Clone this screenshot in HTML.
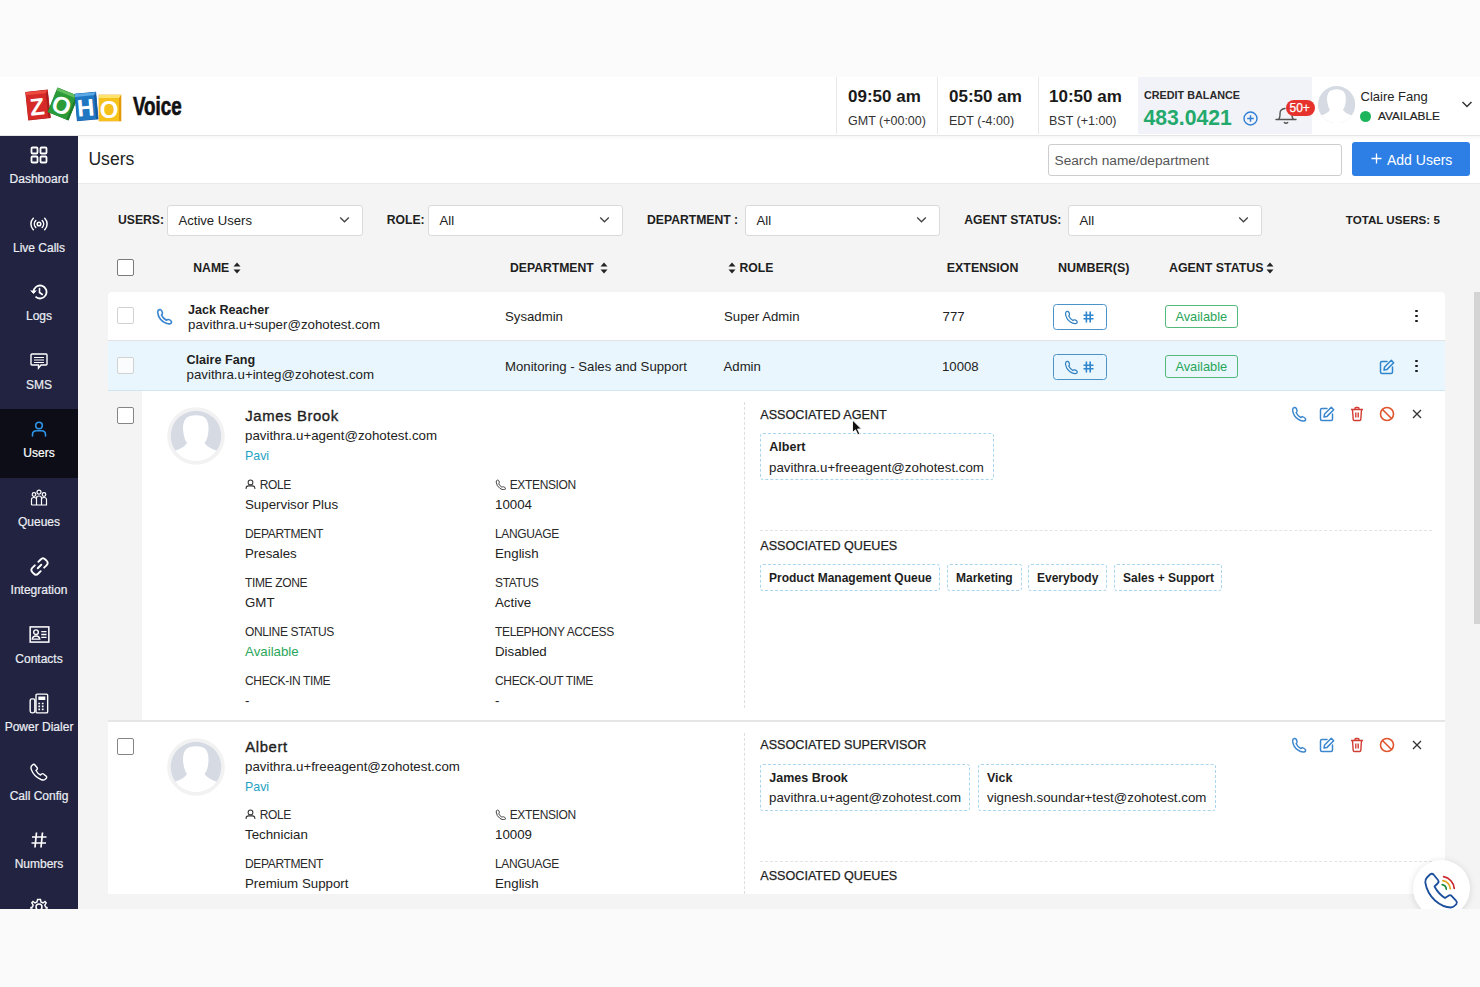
<!DOCTYPE html><html><head><meta charset="utf-8"><style>
html,body{margin:0;padding:0}
body{width:1480px;height:987px;overflow:hidden;position:relative;background:#fbfbfb;font-family:"Liberation Sans", sans-serif;}
.t{position:absolute;white-space:nowrap}
.r{position:absolute;box-sizing:border-box}
</style></head><body>
<div class="r" style="left:0px;top:77px;width:1480px;height:59px;background:#fff;border-bottom:1px solid #e6e6e6"></div>
<div class="r" style="left:27px;top:91px;width:22px;height:28px;transform:rotate(-6deg);background:#d62a28;border-top:3px solid #ec4a3e;border-right:2px solid #a81e1d;box-shadow:0 0 0 0.3px #a81e1d"><div style="position:absolute;left:0;right:0;top:0;bottom:0;text-align:center;font-weight:700;color:#fff;font-size:24px;line-height:25px;font-family:"Liberation Sans", sans-serif;-webkit-text-stroke:0.6px #fff">Z</div></div>
<div class="r" style="left:52px;top:91px;width:22px;height:26px;transform:rotate(22deg);background:#2b9b3a;border-top:3px solid #62be5e;border-right:2px solid #1f7a2c;box-shadow:0 0 0 0.3px #1f7a2c"><div style="position:absolute;left:0;right:0;top:0;bottom:0;text-align:center;font-weight:700;color:#fff;font-size:24px;line-height:23px;font-family:"Liberation Sans", sans-serif;-webkit-text-stroke:0.6px #fff">O</div></div>
<div class="r" style="left:76px;top:93px;width:21px;height:27px;transform:rotate(-5deg);background:#1f76c1;border-top:3px solid #5aa8e6;border-right:2px solid #165aa0;box-shadow:0 0 0 0.3px #165aa0"><div style="position:absolute;left:0;right:0;top:0;bottom:0;text-align:center;font-weight:700;color:#fff;font-size:24px;line-height:24px;font-family:"Liberation Sans", sans-serif;-webkit-text-stroke:0.6px #fff">H</div></div>
<div class="r" style="left:99px;top:95px;width:22px;height:26px;transform:rotate(0deg);background:#f6c11a;border-top:3px solid #fde36b;border-right:2px solid #e39a0a;box-shadow:0 0 0 0.3px #e39a0a"><div style="position:absolute;left:0;right:0;top:0;bottom:0;text-align:center;font-weight:700;color:#fff;font-size:24px;line-height:23px;font-family:"Liberation Sans", sans-serif;-webkit-text-stroke:0.6px #fff">O</div></div>
<div class="t" style="left:132.5px;top:91px;font-size:25px;line-height:30px;font-weight:700;color:#111;-webkit-text-stroke:0.7px #111;transform:scaleX(0.75);transform-origin:0 0">Voice</div>
<div class="r" style="left:836px;top:77px;width:1px;height:57px;background:#e8e8e8"></div>
<div class="r" style="left:937px;top:77px;width:1px;height:57px;background:#e8e8e8"></div>
<div class="r" style="left:1038px;top:77px;width:1px;height:57px;background:#e8e8e8"></div>
<div class="t" style="left:848.0px;top:87.7px;font-size:17px;line-height:17px;font-weight:700;color:#1a1a1a;">09:50 am</div>
<div class="t" style="left:848.0px;top:114.6px;font-size:12.5px;line-height:12.5px;font-weight:400;color:#333;">GMT (+00:00)</div>
<div class="t" style="left:949.0px;top:87.7px;font-size:17px;line-height:17px;font-weight:700;color:#1a1a1a;">05:50 am</div>
<div class="t" style="left:949.0px;top:114.6px;font-size:12.5px;line-height:12.5px;font-weight:400;color:#333;">EDT (-4:00)</div>
<div class="t" style="left:1049.0px;top:87.7px;font-size:17px;line-height:17px;font-weight:700;color:#1a1a1a;">10:50 am</div>
<div class="t" style="left:1049.0px;top:114.6px;font-size:12.5px;line-height:12.5px;font-weight:400;color:#333;">BST (+1:00)</div>
<div class="r" style="left:1138px;top:77px;width:174px;height:57px;background:#f1f3f8"></div>
<div class="t" style="left:1144.0px;top:89.6px;font-size:10.8px;line-height:10.8px;font-weight:700;color:#2a2a2a;">CREDIT BALANCE</div>
<div class="t" style="left:1143.5px;top:107.4px;font-size:21.2px;line-height:21.2px;font-weight:700;color:#23a96c;">483.0421</div>
<svg class="r" style="left:1243px;top:111px;" width="15" height="15" viewBox="0 0 15 15"><circle cx="7.5" cy="7.5" r="6.5" fill="none" stroke="#2f7fd6" stroke-width="1.4"/><path d="M7.5 4.2v6.6M4.2 7.5h6.6" stroke="#2f7fd6" stroke-width="1.4"/></svg>
<svg class="r" style="left:1274px;top:104px;" width="24" height="22" viewBox="0 0 24 22"><path d="M2 15.5 H22 M4.5 15.5 Q6 14 6 11 V9.5 Q6 5 11 4.5 M19.5 15.5 Q18 14 18 11 V9.5" fill="none" stroke="#555" stroke-width="1.4" stroke-linejoin="round" stroke-linecap="round"/><path d="M10.3 18.6 Q12 19.8 13.7 18.6" fill="none" stroke="#555" stroke-width="1.4" stroke-linecap="round"/></svg>
<div class="r" style="left:1285.5px;top:100px;width:29.5px;height:16px;background:#e5322d;border-radius:8px"></div>
<div class="t" style="left:1289.5px;top:102.3px;font-size:12px;line-height:12px;font-weight:400;color:#fff;-webkit-text-stroke:0.25px #fff">50+</div>
<svg class="r" style="left:1317.7px;top:86px" width="37.2" height="37.2" viewBox="4.7 4.7 50.6 50.6"><defs><clipPath id="avh"><circle cx="30" cy="30" r="25.3"/></clipPath></defs><circle cx="30" cy="30" r="25.3" fill="#d5dae3"/><g clip-path="url(#avh)"><path d="M21 37 Q18 33 17 24 Q16.5 12 24 10 Q30 8.5 36 10 Q43 12 42.5 24 Q42 33 38.5 37 Q42 42 50 44.5 L60 45 L60 60 L0 60 L0 45 L9.7 44.5 Q18 42 21 37 Z" fill="#fff"/></g></svg>
<div class="t" style="left:1360.5px;top:90.2px;font-size:13px;line-height:13px;font-weight:400;color:#222;">Claire Fang</div>
<div class="r" style="left:1360px;top:111px;width:11px;height:11px;background:#1cb55b;border-radius:50%"></div>
<div class="t" style="left:1378.0px;top:110.8px;font-size:11.8px;line-height:11.8px;font-weight:400;color:#222;-webkit-text-stroke:0.2px #222">AVAILABLE</div>
<svg class="r" style="left:1461px;top:100px;" width="12" height="9" viewBox="0 0 12 9"><path d="M1.5 2 L6 6.5 L10.5 2" fill="none" stroke="#333" stroke-width="1.5"/></svg>
<div class="r" style="left:0px;top:135.5px;width:78px;height:773.5px;background:#212340"></div>
<div class="r" style="left:0px;top:409px;width:78px;height:69px;background:#0c0d17"></div>
<svg class="r" style="left:30.0px;top:146.0px;" width="18" height="18" viewBox="0 0 18 18"><rect x="1.5" y="1.5" width="6" height="6" rx="1" fill="none" stroke="#fff" stroke-width="1.8"/><rect x="10.5" y="1.5" width="6" height="6" rx="1" fill="none" stroke="#fff" stroke-width="1.8"/><rect x="1.5" y="10.5" width="6" height="6" rx="1" fill="none" stroke="#fff" stroke-width="1.8"/><rect x="10.5" y="10.5" width="6" height="6" rx="1" fill="none" stroke="#fff" stroke-width="1.8"/></svg>
<div class="t" style="left:9.6px;top:173.0px;font-size:12px;line-height:12px;font-weight:400;color:#eceef4;-webkit-text-stroke:0.2px">Dashboard</div>
<svg class="r" style="left:30.0px;top:214.5px;" width="18" height="18" viewBox="0 0 18 18"><circle cx="9" cy="9" r="1.8" fill="none" stroke="#fff" stroke-width="1.5"/><path d="M5.8 5.5 A5 5 0 0 0 5.8 12.5 M12.2 5.5 A5 5 0 0 1 12.2 12.5 M3.3 3.3 A8 8 0 0 0 3.3 14.7 M14.7 3.3 A8 8 0 0 1 14.7 14.7" fill="none" stroke="#fff" stroke-width="1.5" stroke-linecap="round"/></svg>
<div class="t" style="left:13.0px;top:241.5px;font-size:12px;line-height:12px;font-weight:400;color:#eceef4;-webkit-text-stroke:0.2px">Live Calls</div>
<svg class="r" style="left:30.0px;top:283.0px;" width="18" height="18" viewBox="0 0 18 18"><path d="M3.5 9 A6.5 6.5 0 1 1 5.5 13.7" fill="none" stroke="#fff" stroke-width="1.8"/><path d="M0.8 7.5 L3.5 10.5 L6.2 7.5" fill="#fff" stroke="#fff" stroke-width="1"/><path d="M9.5 5.5 V9.5 L12.3 11.5" fill="none" stroke="#fff" stroke-width="1.6" stroke-linecap="round"/></svg>
<div class="t" style="left:26.0px;top:310.0px;font-size:12px;line-height:12px;font-weight:400;color:#eceef4;-webkit-text-stroke:0.2px">Logs</div>
<svg class="r" style="left:30.0px;top:351.5px;" width="18" height="18" viewBox="0 0 18 18"><path d="M2 2 H16 Q17 2 17 3 V12 Q17 13 16 13 H11 L8.5 16 V13 H2 Q1 13 1 12 V3 Q1 2 2 2 Z" fill="none" stroke="#fff" stroke-width="1.4"/><path d="M4 5.5 H14 M4 8 H14 M4 10.5 H14" stroke="#fff" stroke-width="1.2"/></svg>
<div class="t" style="left:26.0px;top:378.5px;font-size:12px;line-height:12px;font-weight:400;color:#eceef4;-webkit-text-stroke:0.2px">SMS</div>
<svg class="r" style="left:30.0px;top:420.0px;" width="18" height="18" viewBox="0 0 18 18"><circle cx="9" cy="5.5" r="3.3" fill="none" stroke="#2f95e8" stroke-width="1.6"/><path d="M2.5 16 V14.5 Q2.5 10.8 6.5 10.8 H11.5 Q15.5 10.8 15.5 14.5 V16" fill="none" stroke="#2f95e8" stroke-width="1.6" stroke-linecap="round"/></svg>
<div class="t" style="left:23.3px;top:447.0px;font-size:12px;line-height:12px;font-weight:400;color:#fff;-webkit-text-stroke:0.2px">Users</div>
<svg class="r" style="left:30.0px;top:488.5px;" width="18" height="18" viewBox="0 0 18 18"><circle cx="9" cy="3.2" r="2" fill="none" stroke="#fff" stroke-width="1.2"/><circle cx="4" cy="5.5" r="1.8" fill="none" stroke="#fff" stroke-width="1.2"/><circle cx="14" cy="5.5" r="1.8" fill="none" stroke="#fff" stroke-width="1.2"/><path d="M6.5 16 V9 Q6.5 7 9 7 Q11.5 7 11.5 9 V16 M1.5 16 V10.5 Q1.5 8.5 4 8.5 Q6.5 8.5 6.5 10.5 M11.5 10.5 Q11.5 8.5 14 8.5 Q16.5 8.5 16.5 10.5 V16 H1.5" fill="none" stroke="#fff" stroke-width="1.2"/></svg>
<div class="t" style="left:18.0px;top:515.5px;font-size:12px;line-height:12px;font-weight:400;color:#eceef4;-webkit-text-stroke:0.2px">Queues</div>
<svg class="r" style="left:28.5px;top:555.5px;" width="21" height="21" viewBox="0 0 18 18"><path d="M7.5 10.5 L10.5 7.5 M8 5 L10 3 Q12 1 14 3 L15 4 Q17 6 15 8 L13 10 M10 13 L8 15 Q6 17 4 15 L3 14 Q1 12 3 10 L5 8" fill="none" stroke="#fff" stroke-width="1.6" stroke-linecap="round"/></svg>
<div class="t" style="left:10.6px;top:584.0px;font-size:12px;line-height:12px;font-weight:400;color:#eceef4;-webkit-text-stroke:0.2px">Integration</div>
<svg class="r" style="left:28.5px;top:624.0px;" width="21" height="21" viewBox="0 0 18 18"><rect x="1" y="2.5" width="16" height="13" fill="none" stroke="#fff" stroke-width="1.3"/><circle cx="6" cy="7" r="2" fill="none" stroke="#fff" stroke-width="1.2"/><path d="M2.8 13 Q3 10.3 6 10.3 Q9 10.3 9.2 13 Z" fill="none" stroke="#fff" stroke-width="1.2"/><path d="M10.5 6.5 H15 M10.5 9 H15 M10.5 11.5 H15" stroke="#fff" stroke-width="1.2"/></svg>
<div class="t" style="left:15.3px;top:652.5px;font-size:12px;line-height:12px;font-weight:400;color:#eceef4;-webkit-text-stroke:0.2px">Contacts</div>
<svg class="r" style="left:28.5px;top:692.5px;" width="21" height="21" viewBox="0 0 18 18"><rect x="1" y="5" width="4" height="12" rx="1.5" fill="none" stroke="#fff" stroke-width="1.2"/><rect x="6" y="1" width="10" height="16" rx="1" fill="none" stroke="#fff" stroke-width="1.2"/><rect x="8" y="3" width="6" height="3" fill="#fff"/><path d="M8 9h1.5M11 9h1.5M8 11.5h1.5M11 11.5h1.5M8 14h1.5M11 14h1.5" stroke="#fff" stroke-width="1.4"/></svg>
<div class="t" style="left:4.7px;top:721.0px;font-size:12px;line-height:12px;font-weight:400;color:#eceef4;-webkit-text-stroke:0.2px">Power Dialer</div>
<svg class="r" style="left:30.0px;top:762.5px;" width="18" height="18" viewBox="0 0 18 18"><path d="M4.5 1.5 L7 4.5 Q7.8 5.5 7 6.5 L6 7.5 Q7.5 10.5 10.5 12 L11.5 11 Q12.5 10.2 13.5 11 L16.5 13.5 Q17 14.5 16 15.5 L15 16.5 Q13.5 17.5 11 16.5 Q4 13.5 1.5 7 Q0.5 4.5 1.5 3 L2.5 2 Q3.5 1 4.5 1.5 Z" fill="none" stroke="#fff" stroke-width="1.4"/></svg>
<div class="t" style="left:9.7px;top:789.5px;font-size:12px;line-height:12px;font-weight:400;color:#eceef4;-webkit-text-stroke:0.2px">Call Config</div>
<svg class="r" style="left:30.0px;top:831.0px;" width="18" height="18" viewBox="0 0 18 18"><path d="M6.5 1.5 L5 16.5 M12.5 1.5 L11 16.5 M2 6 H16.5 M1.5 12 H16" stroke="#fff" stroke-width="1.7"/></svg>
<div class="t" style="left:14.7px;top:858.0px;font-size:12px;line-height:12px;font-weight:400;color:#eceef4;-webkit-text-stroke:0.2px">Numbers</div>
<svg class="r" style="left:30px;top:898px;" width="18" height="18" viewBox="0 0 18 18"><circle cx="9" cy="9" r="3" fill="none" stroke="#fff" stroke-width="1.5"/><path d="M9 1.5 L10.5 1.5 L11 4 L13 5 L15 3.5 L16.2 4.8 L14.8 7 L15.5 9 L17 9.5 L17 11 L15 11.5" fill="none" stroke="#fff" stroke-width="1.4"/><path d="M9 1.5 L7.5 1.5 L7 4 L5 5 L3 3.5 L1.8 4.8 L3.2 7 L2.5 9 L1 9.5 L1 11 L3 11.5" fill="none" stroke="#fff" stroke-width="1.4"/></svg>
<div class="r" style="left:78px;top:136px;width:1402px;height:48px;background:#fff;border-bottom:1px solid #e9e9e9"></div>
<div class="r" style="left:78px;top:136px;width:1402px;height:4px;background:linear-gradient(rgba(0,0,0,0.03),rgba(0,0,0,0))"></div>
<div class="t" style="left:88.4px;top:151.4px;font-size:17.6px;line-height:17.6px;font-weight:400;color:#1e1e1e;">Users</div>
<div class="r" style="left:1048px;top:144px;width:294px;height:32px;background:#fff;border:1px solid #cdcdcd;border-radius:3px"></div>
<div class="t" style="left:1054.5px;top:153.6px;font-size:13.7px;line-height:13.7px;font-weight:400;color:#555;">Search name/department</div>
<div class="r" style="left:1352px;top:142px;width:118px;height:34px;background:#2d7fe6;border-radius:3px"></div>
<svg class="r" style="left:1371px;top:153px;" width="11" height="11" viewBox="0 0 11 11"><path d="M5.5 0.5 V10.5 M0.5 5.5 H10.5" stroke="#fff" stroke-width="1.3"/></svg>
<div class="t" style="left:1387.0px;top:153.4px;font-size:14px;line-height:14px;font-weight:400;color:#fff;">Add Users</div>
<div class="r" style="left:78px;top:184px;width:1402px;height:725px;background:#f4f4f4"></div>
<div class="t" style="left:118.0px;top:213.9px;font-size:12.2px;line-height:12.2px;font-weight:700;color:#1e1e1e;">USERS:</div>
<div class="r" style="left:167px;top:205px;width:196px;height:31px;background:#fff;border:1px solid #dadada;border-radius:3px"></div>
<div class="t" style="left:178.5px;top:214.1px;font-size:13.1px;line-height:13.1px;font-weight:400;color:#222;">Active Users</div>
<svg class="r" style="left:339px;top:216px;" width="11" height="8" viewBox="0 0 11 8"><path d="M1.2 1.5 L5.5 5.8 L9.8 1.5" fill="none" stroke="#444" stroke-width="1.3"/></svg>
<div class="t" style="left:386.7px;top:213.9px;font-size:12.2px;line-height:12.2px;font-weight:700;color:#1e1e1e;">ROLE:</div>
<div class="r" style="left:428px;top:205px;width:195px;height:31px;background:#fff;border:1px solid #dadada;border-radius:3px"></div>
<div class="t" style="left:439.5px;top:214.1px;font-size:13.1px;line-height:13.1px;font-weight:400;color:#222;">All</div>
<svg class="r" style="left:599px;top:216px;" width="11" height="8" viewBox="0 0 11 8"><path d="M1.2 1.5 L5.5 5.8 L9.8 1.5" fill="none" stroke="#444" stroke-width="1.3"/></svg>
<div class="t" style="left:647.0px;top:213.9px;font-size:12.2px;line-height:12.2px;font-weight:700;color:#1e1e1e;">DEPARTMENT :</div>
<div class="r" style="left:745px;top:205px;width:195px;height:31px;background:#fff;border:1px solid #dadada;border-radius:3px"></div>
<div class="t" style="left:756.5px;top:214.1px;font-size:13.1px;line-height:13.1px;font-weight:400;color:#222;">All</div>
<svg class="r" style="left:916px;top:216px;" width="11" height="8" viewBox="0 0 11 8"><path d="M1.2 1.5 L5.5 5.8 L9.8 1.5" fill="none" stroke="#444" stroke-width="1.3"/></svg>
<div class="t" style="left:964.3px;top:213.9px;font-size:12.2px;line-height:12.2px;font-weight:700;color:#1e1e1e;">AGENT STATUS:</div>
<div class="r" style="left:1068px;top:205px;width:194px;height:31px;background:#fff;border:1px solid #dadada;border-radius:3px"></div>
<div class="t" style="left:1079.5px;top:214.1px;font-size:13.1px;line-height:13.1px;font-weight:400;color:#222;">All</div>
<svg class="r" style="left:1238px;top:216px;" width="11" height="8" viewBox="0 0 11 8"><path d="M1.2 1.5 L5.5 5.8 L9.8 1.5" fill="none" stroke="#444" stroke-width="1.3"/></svg>
<div class="t" style="left:1345.8px;top:214.2px;font-size:11.6px;line-height:11.6px;font-weight:700;color:#1e1e1e;">TOTAL USERS: 5</div>
<div class="r" style="left:117px;top:259px;width:17px;height:17px;background:#fff;border:1.5px solid #7a7a7a;border-radius:2px"></div>
<div class="t" style="left:193.3px;top:261.9px;font-size:12.2px;line-height:12.2px;font-weight:700;color:#1e1e1e;">NAME</div>
<svg class="r" style="left:232.5px;top:262px;" width="8" height="12" viewBox="0 0 8 12"><path d="M4 0.5 L7.5 4.5 H0.5 Z M4 11.5 L7.5 7.5 H0.5 Z" fill="#222"/></svg>
<div class="t" style="left:510.0px;top:261.9px;font-size:12.2px;line-height:12.2px;font-weight:700;color:#1e1e1e;">DEPARTMENT</div>
<svg class="r" style="left:599.5px;top:262px;" width="8" height="12" viewBox="0 0 8 12"><path d="M4 0.5 L7.5 4.5 H0.5 Z M4 11.5 L7.5 7.5 H0.5 Z" fill="#222"/></svg>
<svg class="r" style="left:727.5px;top:262px;" width="8" height="12" viewBox="0 0 8 12"><path d="M4 0.5 L7.5 4.5 H0.5 Z M4 11.5 L7.5 7.5 H0.5 Z" fill="#222"/></svg>
<div class="t" style="left:739.5px;top:261.9px;font-size:12.2px;line-height:12.2px;font-weight:700;color:#1e1e1e;">ROLE</div>
<div class="t" style="left:946.8px;top:261.7px;font-size:12.4px;line-height:12.4px;font-weight:700;color:#1e1e1e;">EXTENSION</div>
<div class="t" style="left:1058.0px;top:261.6px;font-size:12.5px;line-height:12.5px;font-weight:700;color:#1e1e1e;">NUMBER(S)</div>
<div class="t" style="left:1169.0px;top:261.7px;font-size:12.4px;line-height:12.4px;font-weight:700;color:#1e1e1e;">AGENT STATUS</div>
<svg class="r" style="left:1266px;top:262px;" width="8" height="12" viewBox="0 0 8 12"><path d="M4 0.5 L7.5 4.5 H0.5 Z M4 11.5 L7.5 7.5 H0.5 Z" fill="#222"/></svg>
<div class="r" style="left:108px;top:292px;width:1337px;height:49px;background:#fff;border-bottom:1px solid #e3e3e3;border-radius:4px 4px 0 0"></div>
<div class="r" style="left:117px;top:307px;width:17px;height:17px;background:#fff;border:1.3px solid #d2d2d2;border-radius:2px"></div>
<svg class="r" style="left:156px;top:308px;" width="17" height="17" viewBox="0 0 15.5 15.5"><path d="M3.2 1.5 Q1.5 1.8 1.6 4 Q2.2 9.5 6.5 12.5 Q9.5 14.8 12.5 14.5 Q14.5 14.2 14 12.3 Q13.5 11 11.5 10.5 Q10 10.3 9.5 11.2 Q6.5 9.5 5 6.5 Q6 5.8 5.8 4.3 Q5.5 2.2 4.5 1.7 Q3.8 1.4 3.2 1.5 Z" fill="none" stroke="#3a86cf" stroke-width="1.5" stroke-linejoin="round"/></svg>
<div class="t" style="left:188.0px;top:303.5px;font-size:12.6px;line-height:12.6px;font-weight:700;color:#1e1e1e;">Jack Reacher</div>
<div class="t" style="left:188.0px;top:317.8px;font-size:13.3px;line-height:13.3px;font-weight:400;color:#222;">pavithra.u+super@zohotest.com</div>
<div class="t" style="left:505.0px;top:309.7px;font-size:13.2px;line-height:13.2px;font-weight:400;color:#222;">Sysadmin</div>
<div class="t" style="left:724.0px;top:309.7px;font-size:13.2px;line-height:13.2px;font-weight:400;color:#222;">Super Admin</div>
<div class="t" style="left:942.6px;top:310.0px;font-size:13.2px;line-height:13.2px;font-weight:400;color:#222;">777</div>
<div class="r" style="left:1053px;top:304px;width:53.5px;height:26.30000000000001px;border:1.5px solid #4a93c8;border-radius:3.5px"></div>
<svg class="r" style="left:1064px;top:310px;" width="15" height="15" viewBox="0 0 16 16"><path d="M3.2 1.5 Q1.5 1.8 1.6 4 Q2.2 9.5 6.5 12.5 Q9.5 14.8 12.5 14.5 Q14.5 14.2 14 12.3 Q13.5 11 11.5 10.5 Q10 10.3 9.5 11.2 Q6.5 9.5 5 6.5 Q6 5.8 5.8 4.3 Q5.5 2.2 4.5 1.7 Q3.8 1.4 3.2 1.5 Z" fill="none" stroke="#2f7fc0" stroke-width="1.3" stroke-linejoin="round"/></svg>
<svg class="r" style="left:1082px;top:311px;" width="13" height="12" viewBox="0 0 13 12"><path d="M4.4 0.5 V11.5 M8.2 0.5 V11.5 M1.5 4.2 H11.5 M1.5 7.7 H11.5" stroke="#2f86cc" stroke-width="1.6"/></svg>
<div class="r" style="left:1164.5px;top:305px;width:73.5px;height:22.5px;border:1.3px solid #52b97a;border-radius:3px"></div>
<div class="t" style="left:1175.4px;top:310.9px;font-size:12.8px;line-height:12.8px;font-weight:400;color:#28a558;">Available</div>
<div class="r" style="left:1415.3999999999999px;top:309.6px;width:2.800000000000182px;height:2.7999999999999545px;background:#1a1a1a;border-radius:50%"></div>
<div class="r" style="left:1415.3999999999999px;top:314.6px;width:2.800000000000182px;height:2.7999999999999545px;background:#1a1a1a;border-radius:50%"></div>
<div class="r" style="left:1415.3999999999999px;top:319.6px;width:2.800000000000182px;height:2.7999999999999545px;background:#1a1a1a;border-radius:50%"></div>
<div class="r" style="left:108px;top:341px;width:1337px;height:50px;background:#e9f6fd;border-bottom:1.5px solid #cfe6ee"></div>
<div class="r" style="left:117px;top:357px;width:17px;height:17px;background:#fafcfd;border:1.3px solid #d2d2d2;border-radius:2px"></div>
<div class="t" style="left:186.5px;top:353.8px;font-size:12.6px;line-height:12.6px;font-weight:700;color:#1e1e1e;">Claire Fang</div>
<div class="t" style="left:186.5px;top:367.5px;font-size:13.3px;line-height:13.3px;font-weight:400;color:#222;">pavithra.u+integ@zohotest.com</div>
<div class="t" style="left:505.0px;top:359.7px;font-size:13.2px;line-height:13.2px;font-weight:400;color:#222;">Monitoring - Sales and Support</div>
<div class="t" style="left:723.5px;top:359.7px;font-size:13.2px;line-height:13.2px;font-weight:400;color:#222;">Admin</div>
<div class="t" style="left:942.0px;top:360.0px;font-size:13.2px;line-height:13.2px;font-weight:400;color:#222;">10008</div>
<div class="r" style="left:1053px;top:354px;width:53.5px;height:26.30000000000001px;border:1.5px solid #4a93c8;border-radius:3.5px"></div>
<svg class="r" style="left:1064px;top:360px;" width="15" height="15" viewBox="0 0 16 16"><path d="M3.2 1.5 Q1.5 1.8 1.6 4 Q2.2 9.5 6.5 12.5 Q9.5 14.8 12.5 14.5 Q14.5 14.2 14 12.3 Q13.5 11 11.5 10.5 Q10 10.3 9.5 11.2 Q6.5 9.5 5 6.5 Q6 5.8 5.8 4.3 Q5.5 2.2 4.5 1.7 Q3.8 1.4 3.2 1.5 Z" fill="none" stroke="#2f7fc0" stroke-width="1.3" stroke-linejoin="round"/></svg>
<svg class="r" style="left:1082px;top:361px;" width="13" height="12" viewBox="0 0 13 12"><path d="M4.4 0.5 V11.5 M8.2 0.5 V11.5 M1.5 4.2 H11.5 M1.5 7.7 H11.5" stroke="#2f86cc" stroke-width="1.6"/></svg>
<div class="r" style="left:1164.5px;top:355px;width:73.5px;height:22.5px;border:1.3px solid #52b97a;border-radius:3px"></div>
<div class="t" style="left:1175.4px;top:360.9px;font-size:12.8px;line-height:12.8px;font-weight:400;color:#28a558;">Available</div>
<svg class="r" style="left:1379px;top:359px;" width="16" height="16" viewBox="0 0 16 16"><path d="M8 2.5 H3 Q1.5 2.5 1.5 4 V13 Q1.5 14.5 3 14.5 H12 Q13.5 14.5 13.5 13 V8" fill="none" stroke="#2f86cc" stroke-width="1.5" stroke-linecap="round"/><path d="M12.3 1.3 L14.7 3.7 L8 10.4 L5 11 L5.6 8 Z" fill="none" stroke="#2f86cc" stroke-width="1.5" stroke-linejoin="round"/></svg>
<div class="r" style="left:1415.3999999999999px;top:359.6px;width:2.800000000000182px;height:2.7999999999999545px;background:#1a1a1a;border-radius:50%"></div>
<div class="r" style="left:1415.3999999999999px;top:364.6px;width:2.800000000000182px;height:2.7999999999999545px;background:#1a1a1a;border-radius:50%"></div>
<div class="r" style="left:1415.3999999999999px;top:369.6px;width:2.800000000000182px;height:2.7999999999999545px;background:#1a1a1a;border-radius:50%"></div>
<div class="r" style="left:142px;top:391px;width:1303px;height:329px;background:#fff"></div>
<div class="r" style="left:117px;top:407px;width:16.5px;height:16.5px;background:#fff;border:1.3px solid #858585;border-radius:2px"></div>
<svg class="r" style="left:165.7px;top:405.6px" width="60" height="60" viewBox="0 0 60 60"><circle cx="30" cy="30" r="27" fill="#fff" stroke="#f2f2f2" stroke-width="3.6"/><defs><clipPath id="av1"><circle cx="30" cy="30" r="25.3"/></clipPath></defs><circle cx="30" cy="30" r="25.3" fill="#d5dae3"/><g clip-path="url(#av1)"><path d="M21 37 Q18 33 17 24 Q16.5 12 24 10 Q30 8.5 36 10 Q43 12 42.5 24 Q42 33 38.5 37 Q42 42 50 44.5 L60 45 L60 60 L0 60 L0 45 L9.7 44.5 Q18 42 21 37 Z" fill="#fff"/></g></svg>
<div class="t" style="left:245.3px;top:409.1px;font-size:14.9px;line-height:14.9px;font-weight:400;color:#1e1e1e;-webkit-text-stroke:0.35px #1e1e1e;letter-spacing:0.6px">James Brook</div>
<div class="t" style="left:245.0px;top:428.7px;font-size:13.3px;line-height:13.3px;font-weight:400;color:#222;">pavithra.u+agent@zohotest.com</div>
<div class="t" style="left:245.0px;top:449.9px;font-size:12.4px;line-height:12.4px;font-weight:400;color:#1ea2c4;">Pavi</div>
<svg class="r" style="left:245px;top:479.0px;" width="11" height="11" viewBox="0 0 12 12"><circle cx="6" cy="3.8" r="2.6" fill="none" stroke="#333" stroke-width="1.1"/><path d="M1.2 11 V10 Q1.2 7.5 4 7.5 H8 Q10.8 7.5 10.8 10 V11" fill="none" stroke="#333" stroke-width="1.1"/></svg>
<div class="t" style="left:259.7px;top:479.1px;font-size:12px;line-height:12px;font-weight:400;color:#2a2a2a;letter-spacing:-0.35px">ROLE</div>
<svg class="r" style="left:494.5px;top:478.7px;" width="11.5" height="11.5" viewBox="0 0 15.5 15.5"><path d="M3.2 1.5 Q1.5 1.8 1.6 4 Q2.2 9.5 6.5 12.5 Q9.5 14.8 12.5 14.5 Q14.5 14.2 14 12.3 Q13.5 11 11.5 10.5 Q10 10.3 9.5 11.2 Q6.5 9.5 5 6.5 Q6 5.8 5.8 4.3 Q5.5 2.2 4.5 1.7 Q3.8 1.4 3.2 1.5 Z" fill="none" stroke="#333" stroke-width="1.25" stroke-linejoin="round"/></svg>
<div class="t" style="left:509.7px;top:479.1px;font-size:12px;line-height:12px;font-weight:400;color:#2a2a2a;letter-spacing:-0.35px">EXTENSION</div>
<div class="t" style="left:245.0px;top:498.0px;font-size:13.3px;line-height:13.3px;font-weight:400;color:#222;">Supervisor Plus</div>
<div class="t" style="left:495.0px;top:498.0px;font-size:13.3px;line-height:13.3px;font-weight:400;color:#222;">10004</div>
<div class="t" style="left:245.0px;top:528.1px;font-size:12px;line-height:12px;font-weight:400;color:#2a2a2a;letter-spacing:-0.35px">DEPARTMENT</div>
<div class="t" style="left:495.0px;top:528.1px;font-size:12px;line-height:12px;font-weight:400;color:#2a2a2a;letter-spacing:-0.35px">LANGUAGE</div>
<div class="t" style="left:245.0px;top:547.0px;font-size:13.3px;line-height:13.3px;font-weight:400;color:#222;">Presales</div>
<div class="t" style="left:495.0px;top:547.0px;font-size:13.3px;line-height:13.3px;font-weight:400;color:#222;">English</div>
<div class="t" style="left:245.0px;top:577.1px;font-size:12px;line-height:12px;font-weight:400;color:#2a2a2a;letter-spacing:-0.35px">TIME ZONE</div>
<div class="t" style="left:495.0px;top:577.1px;font-size:12px;line-height:12px;font-weight:400;color:#2a2a2a;letter-spacing:-0.35px">STATUS</div>
<div class="t" style="left:245.0px;top:596.0px;font-size:13.3px;line-height:13.3px;font-weight:400;color:#222;">GMT</div>
<div class="t" style="left:495.0px;top:596.0px;font-size:13.3px;line-height:13.3px;font-weight:400;color:#222;">Active</div>
<div class="t" style="left:245.0px;top:626.1px;font-size:12px;line-height:12px;font-weight:400;color:#2a2a2a;letter-spacing:-0.35px">ONLINE STATUS</div>
<div class="t" style="left:495.0px;top:626.1px;font-size:12px;line-height:12px;font-weight:400;color:#2a2a2a;letter-spacing:-0.35px">TELEPHONY ACCESS</div>
<div class="t" style="left:245.0px;top:645.0px;font-size:13.3px;line-height:13.3px;font-weight:400;color:#2aa65a;">Available</div>
<div class="t" style="left:495.0px;top:645.0px;font-size:13.3px;line-height:13.3px;font-weight:400;color:#222;">Disabled</div>
<div class="t" style="left:245.0px;top:675.1px;font-size:12px;line-height:12px;font-weight:400;color:#2a2a2a;letter-spacing:-0.35px">CHECK-IN TIME</div>
<div class="t" style="left:495.0px;top:675.1px;font-size:12px;line-height:12px;font-weight:400;color:#2a2a2a;letter-spacing:-0.35px">CHECK-OUT TIME</div>
<div class="t" style="left:245.0px;top:694.0px;font-size:13.3px;line-height:13.3px;font-weight:400;color:#222;">-</div>
<div class="t" style="left:495.0px;top:694.0px;font-size:13.3px;line-height:13.3px;font-weight:400;color:#222;">-</div>
<div class="r" style="left:744px;top:402px;width:1px;height:306px;border-left:1px dashed #dedede"></div>
<div class="t" style="left:760.3px;top:408.5px;font-size:12.6px;line-height:12.6px;font-weight:400;color:#1e1e1e;-webkit-text-stroke:0.25px #1e1e1e">ASSOCIATED AGENT</div>
<div class="r" style="left:760px;top:433px;width:234px;height:47px;border:1px dashed #a9d6ee;border-radius:3px"></div>
<div class="t" style="left:769.3px;top:440.6px;font-size:12.5px;line-height:12.5px;font-weight:700;color:#1e1e1e;">Albert</div>
<div class="t" style="left:769.0px;top:460.5px;font-size:13.3px;line-height:13.3px;font-weight:400;color:#222;">pavithra.u+freeagent@zohotest.com</div>
<div class="r" style="left:760px;top:530px;width:672px;height:1px;border-top:1px dashed #e3e3e3"></div>
<div class="t" style="left:760.3px;top:539.5px;font-size:12.6px;line-height:12.6px;font-weight:400;color:#1e1e1e;-webkit-text-stroke:0.25px #1e1e1e">ASSOCIATED QUEUES</div>
<div class="r" style="left:760px;top:564px;width:180px;height:27px;border:1px dashed #a9d6ee;border-radius:3px"></div>
<div class="t" style="left:769.0px;top:572.0px;font-size:12px;line-height:12px;font-weight:700;color:#1e1e1e;">Product Management Queue</div>
<div class="r" style="left:947px;top:564px;width:75px;height:27px;border:1px dashed #a9d6ee;border-radius:3px"></div>
<div class="t" style="left:956.0px;top:572.0px;font-size:12px;line-height:12px;font-weight:700;color:#1e1e1e;">Marketing</div>
<div class="r" style="left:1028px;top:564px;width:79px;height:27px;border:1px dashed #a9d6ee;border-radius:3px"></div>
<div class="t" style="left:1037.0px;top:572.0px;font-size:12px;line-height:12px;font-weight:700;color:#1e1e1e;">Everybody</div>
<div class="r" style="left:1114px;top:564px;width:108px;height:27px;border:1px dashed #a9d6ee;border-radius:3px"></div>
<div class="t" style="left:1123.0px;top:572.0px;font-size:12px;line-height:12px;font-weight:700;color:#1e1e1e;">Sales + Support</div>
<svg class="r" style="left:1291px;top:406px;" width="16" height="16" viewBox="0 0 15.5 15.5"><path d="M3.2 1.5 Q1.5 1.8 1.6 4 Q2.2 9.5 6.5 12.5 Q9.5 14.8 12.5 14.5 Q14.5 14.2 14 12.3 Q13.5 11 11.5 10.5 Q10 10.3 9.5 11.2 Q6.5 9.5 5 6.5 Q6 5.8 5.8 4.3 Q5.5 2.2 4.5 1.7 Q3.8 1.4 3.2 1.5 Z" fill="none" stroke="#3a86cf" stroke-width="1.4" stroke-linejoin="round"/></svg>
<svg class="r" style="left:1319px;top:406px;" width="16" height="16" viewBox="0 0 16 16"><path d="M8 2.5 H3 Q1.5 2.5 1.5 4 V13 Q1.5 14.5 3 14.5 H12 Q13.5 14.5 13.5 13 V8" fill="none" stroke="#3a86cf" stroke-width="1.5" stroke-linecap="round"/><path d="M12.3 1.3 L14.7 3.7 L8 10.4 L5 11 L5.6 8 Z" fill="none" stroke="#3a86cf" stroke-width="1.5" stroke-linejoin="round"/></svg>
<svg class="r" style="left:1350px;top:406px;" width="14" height="16" viewBox="0 0 14 16"><path d="M1 3.5 H13 M5 3.5 V2.5 Q5 1.5 6 1.5 H8 Q9 1.5 9 2.5 V3.5 M2.5 3.5 L3.2 13.5 Q3.3 14.5 4.3 14.5 H9.7 Q10.7 14.5 10.8 13.5 L11.5 3.5 M5.8 6.5 V11.5 M8.2 6.5 V11.5" fill="none" stroke="#d23d33" stroke-width="1.4"/></svg>
<svg class="r" style="left:1379px;top:406px;" width="16" height="16" viewBox="0 0 16 16"><circle cx="8" cy="8" r="6.5" fill="none" stroke="#e0542c" stroke-width="1.6"/><path d="M3.5 3.5 L12.5 12.5" stroke="#e0542c" stroke-width="1.6"/></svg>
<svg class="r" style="left:1412px;top:408.7px;" width="10" height="10" viewBox="0 0 10 10"><path d="M1 1 L9 9 M9 1 L1 9" stroke="#333" stroke-width="1.3"/></svg>
<div class="r" style="left:108px;top:720px;width:1337px;height:2px;background:#e6e6e6"></div>
<div class="r" style="left:108px;top:722px;width:1337px;height:172px;background:#fff"></div>
<div class="r" style="left:117px;top:738px;width:16.5px;height:16.5px;background:#fff;border:1.3px solid #858585;border-radius:2px"></div>
<svg class="r" style="left:166px;top:736.5px" width="60" height="60" viewBox="0 0 60 60"><circle cx="30" cy="30" r="27" fill="#fff" stroke="#f2f2f2" stroke-width="3.6"/><defs><clipPath id="av2"><circle cx="30" cy="30" r="25.3"/></clipPath></defs><circle cx="30" cy="30" r="25.3" fill="#d5dae3"/><g clip-path="url(#av2)"><path d="M21 37 Q18 33 17 24 Q16.5 12 24 10 Q30 8.5 36 10 Q43 12 42.5 24 Q42 33 38.5 37 Q42 42 50 44.5 L60 45 L60 60 L0 60 L0 45 L9.7 44.5 Q18 42 21 37 Z" fill="#fff"/></g></svg>
<div class="t" style="left:245.3px;top:739.8px;font-size:14.9px;line-height:14.9px;font-weight:400;color:#1e1e1e;-webkit-text-stroke:0.35px #1e1e1e;letter-spacing:0.6px">Albert</div>
<div class="t" style="left:245.0px;top:760.0px;font-size:13.3px;line-height:13.3px;font-weight:400;color:#222;">pavithra.u+freeagent@zohotest.com</div>
<div class="t" style="left:245.0px;top:780.9px;font-size:12.4px;line-height:12.4px;font-weight:400;color:#1ea2c4;">Pavi</div>
<svg class="r" style="left:245px;top:809.2px;" width="11" height="11" viewBox="0 0 12 12"><circle cx="6" cy="3.8" r="2.6" fill="none" stroke="#333" stroke-width="1.1"/><path d="M1.2 11 V10 Q1.2 7.5 4 7.5 H8 Q10.8 7.5 10.8 10 V11" fill="none" stroke="#333" stroke-width="1.1"/></svg>
<div class="t" style="left:259.7px;top:809.3px;font-size:12px;line-height:12px;font-weight:400;color:#2a2a2a;letter-spacing:-0.35px">ROLE</div>
<svg class="r" style="left:494.5px;top:808.9000000000001px;" width="11.5" height="11.5" viewBox="0 0 15.5 15.5"><path d="M3.2 1.5 Q1.5 1.8 1.6 4 Q2.2 9.5 6.5 12.5 Q9.5 14.8 12.5 14.5 Q14.5 14.2 14 12.3 Q13.5 11 11.5 10.5 Q10 10.3 9.5 11.2 Q6.5 9.5 5 6.5 Q6 5.8 5.8 4.3 Q5.5 2.2 4.5 1.7 Q3.8 1.4 3.2 1.5 Z" fill="none" stroke="#333" stroke-width="1.25" stroke-linejoin="round"/></svg>
<div class="t" style="left:509.7px;top:809.3px;font-size:12px;line-height:12px;font-weight:400;color:#2a2a2a;letter-spacing:-0.35px">EXTENSION</div>
<div class="t" style="left:245.0px;top:828.2px;font-size:13.3px;line-height:13.3px;font-weight:400;color:#222;">Technician</div>
<div class="t" style="left:495.0px;top:828.2px;font-size:13.3px;line-height:13.3px;font-weight:400;color:#222;">10009</div>
<div class="t" style="left:245.0px;top:858.3px;font-size:12px;line-height:12px;font-weight:400;color:#2a2a2a;letter-spacing:-0.35px">DEPARTMENT</div>
<div class="t" style="left:495.0px;top:858.3px;font-size:12px;line-height:12px;font-weight:400;color:#2a2a2a;letter-spacing:-0.35px">LANGUAGE</div>
<div class="t" style="left:245.0px;top:877.2px;font-size:13.3px;line-height:13.3px;font-weight:400;color:#222;">Premium Support</div>
<div class="t" style="left:495.0px;top:877.2px;font-size:13.3px;line-height:13.3px;font-weight:400;color:#222;">English</div>
<div class="r" style="left:744px;top:733px;width:1px;height:161px;border-left:1px dashed #dedede"></div>
<div class="t" style="left:760.3px;top:739.0px;font-size:12.6px;line-height:12.6px;font-weight:400;color:#1e1e1e;-webkit-text-stroke:0.25px #1e1e1e">ASSOCIATED SUPERVISOR</div>
<div class="r" style="left:760px;top:764px;width:210px;height:47px;border:1px dashed #a9d6ee;border-radius:3px"></div>
<div class="t" style="left:769.3px;top:771.6px;font-size:12.5px;line-height:12.5px;font-weight:700;color:#1e1e1e;">James Brook</div>
<div class="t" style="left:769.0px;top:791.0px;font-size:13.3px;line-height:13.3px;font-weight:400;color:#222;">pavithra.u+agent@zohotest.com</div>
<div class="r" style="left:978px;top:764px;width:238px;height:47px;border:1px dashed #a9d6ee;border-radius:3px"></div>
<div class="t" style="left:987.0px;top:771.6px;font-size:12.5px;line-height:12.5px;font-weight:700;color:#1e1e1e;">Vick</div>
<div class="t" style="left:987.0px;top:791.0px;font-size:13.3px;line-height:13.3px;font-weight:400;color:#222;">vignesh.soundar+test@zohotest.com</div>
<div class="r" style="left:760px;top:861px;width:672px;height:1px;border-top:1px dashed #e3e3e3"></div>
<div class="t" style="left:760.3px;top:870.0px;font-size:12.6px;line-height:12.6px;font-weight:400;color:#1e1e1e;-webkit-text-stroke:0.25px #1e1e1e">ASSOCIATED QUEUES</div>
<svg class="r" style="left:1291px;top:737px;" width="16" height="16" viewBox="0 0 15.5 15.5"><path d="M3.2 1.5 Q1.5 1.8 1.6 4 Q2.2 9.5 6.5 12.5 Q9.5 14.8 12.5 14.5 Q14.5 14.2 14 12.3 Q13.5 11 11.5 10.5 Q10 10.3 9.5 11.2 Q6.5 9.5 5 6.5 Q6 5.8 5.8 4.3 Q5.5 2.2 4.5 1.7 Q3.8 1.4 3.2 1.5 Z" fill="none" stroke="#3a86cf" stroke-width="1.4" stroke-linejoin="round"/></svg>
<svg class="r" style="left:1319px;top:737px;" width="16" height="16" viewBox="0 0 16 16"><path d="M8 2.5 H3 Q1.5 2.5 1.5 4 V13 Q1.5 14.5 3 14.5 H12 Q13.5 14.5 13.5 13 V8" fill="none" stroke="#3a86cf" stroke-width="1.5" stroke-linecap="round"/><path d="M12.3 1.3 L14.7 3.7 L8 10.4 L5 11 L5.6 8 Z" fill="none" stroke="#3a86cf" stroke-width="1.5" stroke-linejoin="round"/></svg>
<svg class="r" style="left:1350px;top:737px;" width="14" height="16" viewBox="0 0 14 16"><path d="M1 3.5 H13 M5 3.5 V2.5 Q5 1.5 6 1.5 H8 Q9 1.5 9 2.5 V3.5 M2.5 3.5 L3.2 13.5 Q3.3 14.5 4.3 14.5 H9.7 Q10.7 14.5 10.8 13.5 L11.5 3.5 M5.8 6.5 V11.5 M8.2 6.5 V11.5" fill="none" stroke="#d23d33" stroke-width="1.4"/></svg>
<svg class="r" style="left:1379px;top:737px;" width="16" height="16" viewBox="0 0 16 16"><circle cx="8" cy="8" r="6.5" fill="none" stroke="#e0542c" stroke-width="1.6"/><path d="M3.5 3.5 L12.5 12.5" stroke="#e0542c" stroke-width="1.6"/></svg>
<svg class="r" style="left:1412px;top:739.7px;" width="10" height="10" viewBox="0 0 10 10"><path d="M1 1 L9 9 M9 1 L1 9" stroke="#333" stroke-width="1.3"/></svg>
<div class="r" style="left:1474px;top:292px;width:6px;height:332px;background:#d4d4d4"></div>
<div class="r" style="left:0px;top:909px;width:1480px;height:78px;background:#fafafa"></div>
<div class="r" style="left:1400px;top:850px;width:80px;height:59px;overflow:hidden"><div style="position:absolute;left:12.5px;top:10.2px;width:57px;height:57px;border-radius:50%;background:#fff;box-shadow:0 1px 7px rgba(0,0,0,0.13)"></div><svg style="position:absolute;left:5px;top:5px" width="60" height="60" viewBox="0 0 60 60"><path d="M22 22.5 Q20 24.5 20.3 27.5 Q22 38 30 45.5 Q38 52.5 46 52.5 Q48.5 52.3 50.5 50 L51.5 48.8 Q52.5 47.2 51 45.7 L46.5 40.8 Q45 39.5 43.5 40.7 L40 43 Q33.5 39 29.5 31.5 L33 28 Q34.2 26.5 33 25 L28.5 19.5 Q27 18 25 19.5 Z" fill="none" stroke="#1d4f9c" stroke-width="1.8" stroke-linejoin="round"/><path d="M37.2 29.6 A5 5 0 0 1 41.3 34.1" fill="none" stroke="#1f8a3a" stroke-width="1.7" stroke-linecap="round"/><path d="M37.9 25.6 A9 9 0 0 1 45.3 33.7" fill="none" stroke="#e3a21a" stroke-width="1.7" stroke-linecap="round"/><path d="M38.6 21.7 A13 13 0 0 1 49.25 33.4" fill="none" stroke="#c9282d" stroke-width="1.7" stroke-linecap="round"/></svg></div>
<svg class="r" style="left:851px;top:419px;" width="12" height="17" viewBox="0 0 12 17"><path d="M1.5 1 L1.5 13.5 L4.5 10.8 L6.8 15.8 L8.8 14.9 L6.6 10 L10.5 10 Z" fill="#111" stroke="#fff" stroke-width="0.9" stroke-linejoin="round"/></svg>
</body></html>
